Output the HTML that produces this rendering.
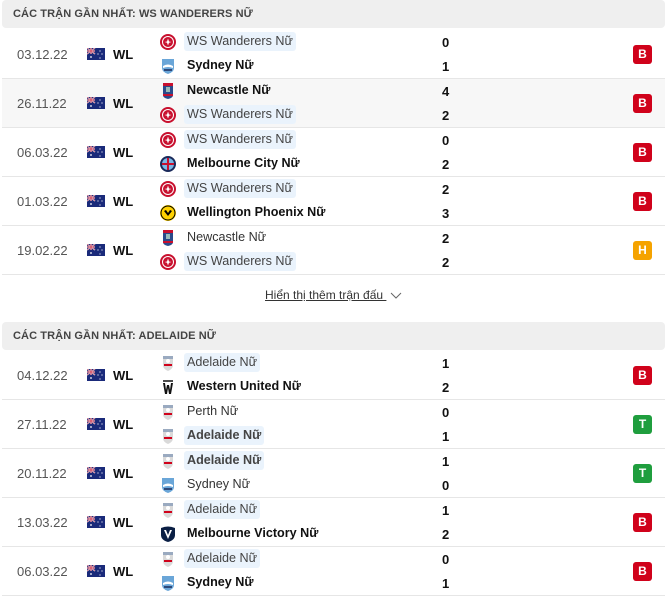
<!DOCTYPE html>
<html><head><meta charset="utf-8"><style>
*{margin:0;padding:0;box-sizing:border-box}
body{width:671px;height:600px;background:#fff;font-family:"Liberation Sans",Arial,sans-serif;position:relative;overflow:hidden;color:#111}
.hd{position:absolute;left:2px;width:663px;height:28px;background:#efefef;border-radius:4px;font-size:11px;font-weight:bold;color:#444;padding-left:11px;line-height:28px;letter-spacing:0.1px}
.row{position:absolute;left:2px;width:663px;height:49px;border-bottom:1px solid #e6e6e6}
.date{position:absolute;left:15px;top:17px;font-size:13px;color:#555}
.flag{position:absolute;left:85px;top:18px;width:18px;height:12px}
.wl{position:absolute;left:111px;top:17px;font-size:13px;font-weight:bold}
.t{position:absolute;left:182px;font-size:12.6px;height:19px;line-height:19px;padding:0 3px;color:#333;border-radius:3px}
.t.b{font-weight:bold;color:#111}
.t.h{background:#eaf3fc;color:#444}
.lg{position:absolute;left:158px;width:16px;height:16px}
.s{position:absolute;left:440px;font-size:13px;font-weight:bold}
.bd{position:absolute;left:631px;top:15px;width:19px;height:19px;border-radius:3px;color:#fff;font-size:12px;font-weight:bold;text-align:center;line-height:19px}
.R{background:#d0021b}.G{background:#1f9e3e}.O{background:#f5a300}
.more{position:absolute;top:288px;left:265px;font-size:12px;color:#333;text-decoration:underline}
</style></head><body>
<svg width="0" height="0" style="position:absolute">
<defs>
<symbol id="au" viewBox="0 0 18 12"><rect width="18" height="12" fill="#1a2a7a"/><path d="M0 0L8 6M8 0L0 6" stroke="#fff" stroke-width="1.2"/><path d="M0 0L8 6M8 0L0 6" stroke="#c8102e" stroke-width=".5"/><path d="M4 0V6M0 3H8" stroke="#fff" stroke-width="1.6"/><path d="M4 0V6M0 3H8" stroke="#c8102e" stroke-width=".8"/><circle cx="4" cy="9" r=".9" fill="#fff"/><circle cx="13" cy="3" r=".6" fill="#fff"/><circle cx="15" cy="6" r=".6" fill="#fff"/><circle cx="13" cy="10" r=".6" fill="#fff"/><circle cx="11" cy="6" r=".6" fill="#fff"/></symbol>
<symbol id="ws" viewBox="0 0 16 16"><circle cx="8" cy="8" r="8" fill="#c8102e"/><circle cx="8" cy="8" r="5.5" fill="none" stroke="#fff" stroke-width="1"/><path d="M8 4.5L9 7.5 11.5 8 9 8.8 8 11.5 7 8.8 4.5 8 7 7.5Z" fill="#fff"/></symbol>
<symbol id="sy" viewBox="0 0 16 16"><path d="M2 1H14V10Q14 14 8 16Q2 14 2 10Z" fill="#6aa6d8"/><path d="M3 8Q8 5 13 8V10Q8 8 3 10Z" fill="#fff"/><path d="M4 12H12" stroke="#1a2a5a" stroke-width="1.5"/></symbol>
<symbol id="nc" viewBox="0 0 16 16"><rect x="3" y="0" width="10" height="3" fill="#c8102e"/><path d="M3 3H13V12Q13 15 8 16Q3 15 3 12Z" fill="#2a4a8a"/><path d="M3 11H13V13H3Z" fill="#c8102e"/><rect x="6" y="4" width="4" height="5" fill="#9bb"/></symbol>
<symbol id="mc" viewBox="0 0 16 16"><circle cx="8" cy="8" r="8" fill="#1a2a5a"/><circle cx="8" cy="8" r="6" fill="#7ab8e6"/><path d="M8 2V14M2 8H14" stroke="#c8102e" stroke-width="2"/></symbol>
<symbol id="wp" viewBox="0 0 16 16"><circle cx="8" cy="8" r="8" fill="#ffd200"/><circle cx="8" cy="8" r="7" fill="none" stroke="#000" stroke-width="1"/><path d="M4 6L8 11 12 6 10 5 8 8 6 5Z" fill="#000"/></symbol>
<symbol id="ad" viewBox="0 0 16 16"><path d="M3 1H13V10Q13 14 8 16Q3 14 3 10Z" fill="#d9d9d9"/><path d="M3 1H13V4H3Z" fill="#9aaac0"/><path d="M4 9H12V11H4Z" fill="#d0021b"/><circle cx="8" cy="6" r="2" fill="#fff"/></symbol>
<symbol id="wu" viewBox="0 0 16 16"><path d="M3 2H13" stroke="#111" stroke-width="1.5"/><path d="M3 4L5 15H7L8 9 9 15H11L13 4H11L10 11 9 6H7L6 11 5 4Z" fill="#111"/></symbol>
<symbol id="mv" viewBox="0 0 16 16"><path d="M1 2Q8 -1 15 2V9Q15 14 8 16Q1 14 1 9Z" fill="#0a1f44"/><path d="M4 4L8 13 12 4H10L8 9 6 4Z" fill="#fff"/></symbol>
</defs></svg>

<div class="hd" style="top:0">CÁC TRẬN GẦN NHẤT: WS WANDERERS NỮ</div>

<div class="row" style="top:30px"><div class="date">03.12.22</div><svg class="flag"><use href="#au"/></svg><div class="wl">WL</div>
<svg class="lg" style="top:4px"><use href="#ws"/></svg><div class="t h" style="top:2px">WS Wanderers Nữ</div>
<svg class="lg" style="top:28px"><use href="#sy"/></svg><div class="t b" style="top:26px">Sydney Nữ</div>
<div class="s" style="top:5px">0</div><div class="s" style="top:29px">1</div><div class="bd R">B</div></div>

<div class="row" style="top:79px;background:#f7f7f7"><div class="date">26.11.22</div><svg class="flag"><use href="#au"/></svg><div class="wl">WL</div>
<svg class="lg" style="top:4px"><use href="#nc"/></svg><div class="t b" style="top:2px">Newcastle Nữ</div>
<svg class="lg" style="top:28px"><use href="#ws"/></svg><div class="t h" style="top:26px">WS Wanderers Nữ</div>
<div class="s" style="top:5px">4</div><div class="s" style="top:29px">2</div><div class="bd R">B</div></div>

<div class="row" style="top:128px"><div class="date">06.03.22</div><svg class="flag"><use href="#au"/></svg><div class="wl">WL</div>
<svg class="lg" style="top:4px"><use href="#ws"/></svg><div class="t h" style="top:2px">WS Wanderers Nữ</div>
<svg class="lg" style="top:28px"><use href="#mc"/></svg><div class="t b" style="top:26px">Melbourne City Nữ</div>
<div class="s" style="top:5px">0</div><div class="s" style="top:29px">2</div><div class="bd R">B</div></div>

<div class="row" style="top:177px"><div class="date">01.03.22</div><svg class="flag"><use href="#au"/></svg><div class="wl">WL</div>
<svg class="lg" style="top:4px"><use href="#ws"/></svg><div class="t h" style="top:2px">WS Wanderers Nữ</div>
<svg class="lg" style="top:28px"><use href="#wp"/></svg><div class="t b" style="top:26px">Wellington Phoenix Nữ</div>
<div class="s" style="top:5px">2</div><div class="s" style="top:29px">3</div><div class="bd R">B</div></div>

<div class="row" style="top:226px"><div class="date">19.02.22</div><svg class="flag"><use href="#au"/></svg><div class="wl">WL</div>
<svg class="lg" style="top:4px"><use href="#nc"/></svg><div class="t" style="top:2px">Newcastle Nữ</div>
<svg class="lg" style="top:28px"><use href="#ws"/></svg><div class="t h" style="top:26px">WS Wanderers Nữ</div>
<div class="s" style="top:5px">2</div><div class="s" style="top:29px">2</div><div class="bd O">H</div></div>

<div class="more">Hiển thị thêm trận đấu <svg width="12" height="8" style="margin-left:4px;vertical-align:middle"><path d="M1 1L6 6 11 1" fill="none" stroke="#666" stroke-width="1"/></svg></div>

<div class="hd" style="top:322px">CÁC TRẬN GẦN NHẤT: ADELAIDE NỮ</div>

<div class="row" style="top:351px"><div class="date">04.12.22</div><svg class="flag"><use href="#au"/></svg><div class="wl">WL</div>
<svg class="lg" style="top:4px"><use href="#ad"/></svg><div class="t h" style="top:2px">Adelaide Nữ</div>
<svg class="lg" style="top:28px"><use href="#wu"/></svg><div class="t b" style="top:26px">Western United Nữ</div>
<div class="s" style="top:5px">1</div><div class="s" style="top:29px">2</div><div class="bd R">B</div></div>

<div class="row" style="top:400px"><div class="date">27.11.22</div><svg class="flag"><use href="#au"/></svg><div class="wl">WL</div>
<svg class="lg" style="top:4px"><use href="#ad"/></svg><div class="t" style="top:2px">Perth Nữ</div>
<svg class="lg" style="top:28px"><use href="#ad"/></svg><div class="t h b" style="top:26px">Adelaide Nữ</div>
<div class="s" style="top:5px">0</div><div class="s" style="top:29px">1</div><div class="bd G">T</div></div>

<div class="row" style="top:449px"><div class="date">20.11.22</div><svg class="flag"><use href="#au"/></svg><div class="wl">WL</div>
<svg class="lg" style="top:4px"><use href="#ad"/></svg><div class="t h b" style="top:2px">Adelaide Nữ</div>
<svg class="lg" style="top:28px"><use href="#sy"/></svg><div class="t" style="top:26px">Sydney Nữ</div>
<div class="s" style="top:5px">1</div><div class="s" style="top:29px">0</div><div class="bd G">T</div></div>

<div class="row" style="top:498px"><div class="date">13.03.22</div><svg class="flag"><use href="#au"/></svg><div class="wl">WL</div>
<svg class="lg" style="top:4px"><use href="#ad"/></svg><div class="t h" style="top:2px">Adelaide Nữ</div>
<svg class="lg" style="top:28px"><use href="#mv"/></svg><div class="t b" style="top:26px">Melbourne Victory Nữ</div>
<div class="s" style="top:5px">1</div><div class="s" style="top:29px">2</div><div class="bd R">B</div></div>

<div class="row" style="top:547px"><div class="date">06.03.22</div><svg class="flag"><use href="#au"/></svg><div class="wl">WL</div>
<svg class="lg" style="top:4px"><use href="#ad"/></svg><div class="t h" style="top:2px">Adelaide Nữ</div>
<svg class="lg" style="top:28px"><use href="#sy"/></svg><div class="t b" style="top:26px">Sydney Nữ</div>
<div class="s" style="top:5px">0</div><div class="s" style="top:29px">1</div><div class="bd R">B</div></div>
</body></html>
